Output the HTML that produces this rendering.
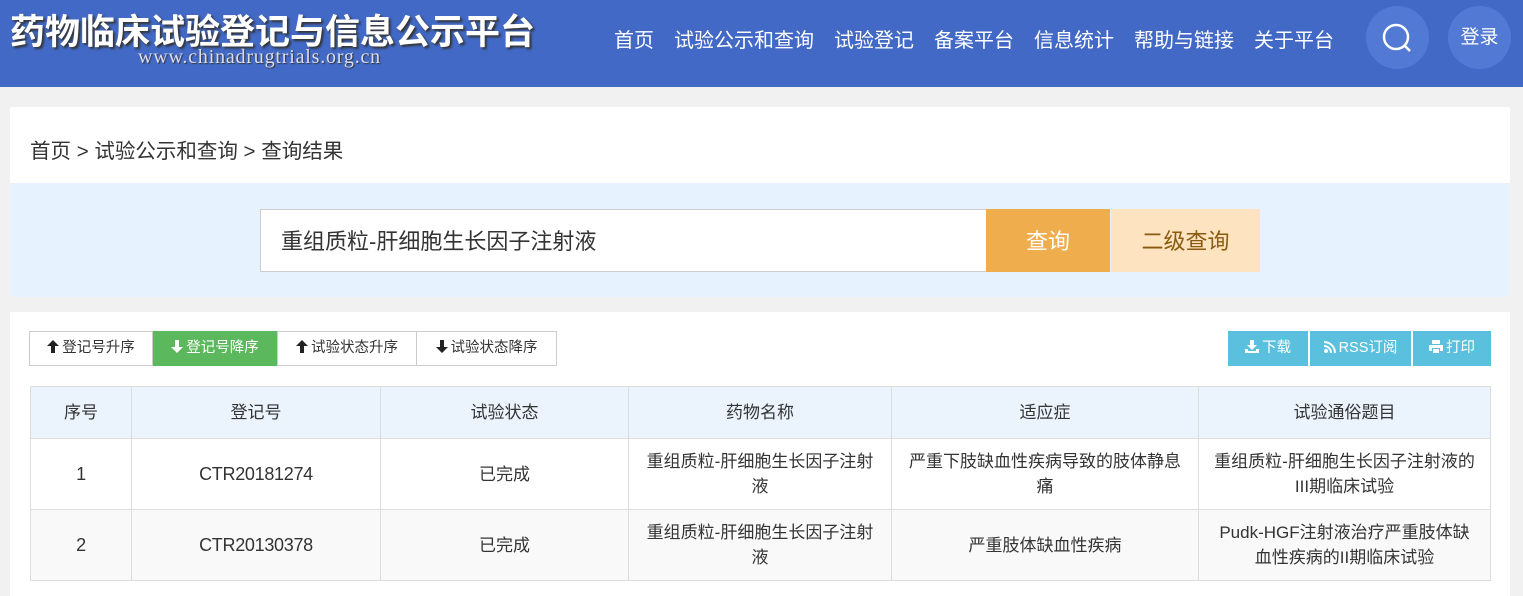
<!DOCTYPE html>
<html><head><meta charset="utf-8"><style>
*{box-sizing:border-box;margin:0;padding:0}
body{width:1523px;height:596px;overflow:hidden;background:#f1f1f1;font-family:"Liberation Sans","Noto Sans CJK SC",sans-serif;color:#333;position:relative}
.hdr{position:absolute;left:0;top:0;width:1523px;height:87px;background:#4169c5}
.logo{position:absolute;left:10px;top:4px;color:#fff;font-size:35px;font-weight:bold;letter-spacing:0px;text-shadow:2px 2px 2px #333;white-space:nowrap}
.url{position:absolute;left:138px;top:46px;color:#dde;font-family:"Liberation Serif",serif;font-size:20px;letter-spacing:0.8px;text-shadow:1px 1px 1px #333}
.nav{position:absolute;top:24px;color:#fff;font-size:20px;white-space:nowrap}
.circ{position:absolute;top:6px;width:63px;height:63px;border-radius:50%;background:#527ad5;color:#fff;font-size:19px;text-align:center;line-height:63px}
.box1{position:absolute;left:10px;top:107px;width:1500px;height:76px;background:#fff}
.bc{position:absolute;left:30px;top:134px;font-size:20.5px}
.band{position:absolute;left:10px;top:183px;width:1500px;height:114px;background:#e6f3fe}
.inp{position:absolute;left:260px;top:209px;width:727px;height:63px;background:#fff;border:1px solid #ccc;font-size:22px;line-height:63px;padding-left:20px}
.b1{position:absolute;left:986px;top:209px;width:124px;height:63px;background:#efad4e;color:#fff;font-size:22px;text-align:center;line-height:65px}
.b2{position:absolute;left:1111px;top:209px;width:149px;height:63px;background:#fde3bf;color:#8a5a10;font-size:22px;text-align:center;line-height:65px}
.box2{position:absolute;left:10px;top:312px;width:1500px;height:284px;background:#fff}
.sort{position:absolute;top:331px;height:35px;border:1px solid #ccc;font-size:14.5px;line-height:33px;text-align:center;background:#fff}
.sort svg,.bl svg{vertical-align:-1px;margin-right:3px}
.g{background:#5cb85c;color:#fff;border-color:#5cb85c}
.bl{position:absolute;top:331px;height:35px;background:#5bc0de;color:#fff;font-size:14.5px;line-height:35px;text-align:center}
table{position:absolute;left:30px;top:386px;width:1461px;border-collapse:collapse;font-size:17px}
td,th{border:1px solid #ddd;text-align:center;font-weight:normal;line-height:25px}
th{background:#ebf3fd;height:52px}
td{height:71px}
td.n{font-size:18px;letter-spacing:-0.3px}
tr.r2 td{background:#f9f9f9}
</style></head><body>
<div class="hdr">
<div class="logo">药物临床试验登记与信息公示平台</div>
<div class="url">www.chinadrugtrials.org.cn</div>
<div class="nav" style="left:614px">首页</div>
<div class="nav" style="left:674px">试验公示和查询</div>
<div class="nav" style="left:834px">试验登记</div>
<div class="nav" style="left:934px">备案平台</div>
<div class="nav" style="left:1034px">信息统计</div>
<div class="nav" style="left:1134px">帮助与链接</div>
<div class="nav" style="left:1254px">关于平台</div>
<div class="circ" style="left:1366px"><svg width="63" height="63" viewBox="0 0 63 63"><circle cx="30" cy="31" r="12" fill="none" stroke="#fff" stroke-width="2.5"/><line x1="39" y1="40" x2="44" y2="45" stroke="#fff" stroke-width="2.5"/></svg></div>
<div class="circ" style="left:1448px">登录</div>
</div>
<div class="box1"></div>
<div class="bc">首页 &gt; 试验公示和查询 &gt; 查询结果</div>
<div class="band"></div>
<div class="inp">重组质粒-肝细胞生长因子注射液</div>
<div class="b1">查询</div>
<div class="b2">二级查询</div>
<div class="box2"></div>
<div class="sort" style="left:29px;width:124px"><svg width="12" height="13" viewBox="0 0 12 13"><path d="M6 0L12 6H8V13H4V6H0Z" fill="#222"/></svg>登记号升序</div>
<div class="sort g" style="left:153px;width:124px"><svg width="12" height="13" viewBox="0 0 12 13"><path d="M6 13L12 7H8V0H4V7H0Z" fill="#fff"/></svg>登记号降序</div>
<div class="sort" style="left:277px;width:140px"><svg width="12" height="13" viewBox="0 0 12 13"><path d="M6 0L12 6H8V13H4V6H0Z" fill="#222"/></svg>试验状态升序</div>
<div class="sort" style="left:416px;width:141px"><svg width="12" height="13" viewBox="0 0 12 13"><path d="M6 13L12 7H8V0H4V7H0Z" fill="#222"/></svg>试验状态降序</div>
<div class="bl" style="left:1228px;width:80px"><svg width="14" height="13" viewBox="0 0 14 13"><path d="M5 0H9V5H12L7 10L2 5H5Z M0 9H3V11H11V9H14V13H0Z" fill="#fff"/></svg>下载</div>
<div class="bl" style="left:1309px;width:102px;border-left:1px solid #fff"><svg width="12" height="12" viewBox="0 0 12 12"><circle cx="2" cy="10" r="2" fill="#fff"/><path d="M0 4A8 8 0 0 1 8 12H6A6 6 0 0 0 0 6Z M0 0A12 12 0 0 1 12 12H10A10 10 0 0 0 0 2Z" fill="#fff"/></svg>RSS订阅</div>
<div class="bl" style="left:1412px;width:79px;border-left:1px solid #fff"><svg width="14" height="13" viewBox="0 0 14 13"><path d="M3 0H11V4H3Z M0 5H14V11H11V8H3V11H0Z M4 9H10V13H4Z" fill="#fff"/></svg>打印</div>
<table>
<tr><th style="width:101px">序号</th><th style="width:249px">登记号</th><th style="width:248px">试验状态</th><th style="width:263px">药物名称</th><th style="width:307px">适应症</th><th>试验通俗题目</th></tr>
<tr><td class="n">1</td><td class="n">CTR20181274</td><td>已完成</td><td>重组质粒-肝细胞生长因子注射<br>液</td><td>严重下肢缺血性疾病导致的肢体静息<br>痛</td><td>重组质粒-肝细胞生长因子注射液的<br>III期临床试验</td></tr>
<tr class="r2"><td class="n">2</td><td class="n">CTR20130378</td><td>已完成</td><td>重组质粒-肝细胞生长因子注射<br>液</td><td>严重肢体缺血性疾病</td><td>Pudk-HGF注射液治疗严重肢体缺<br>血性疾病的II期临床试验</td></tr>
</table>
</body></html>
